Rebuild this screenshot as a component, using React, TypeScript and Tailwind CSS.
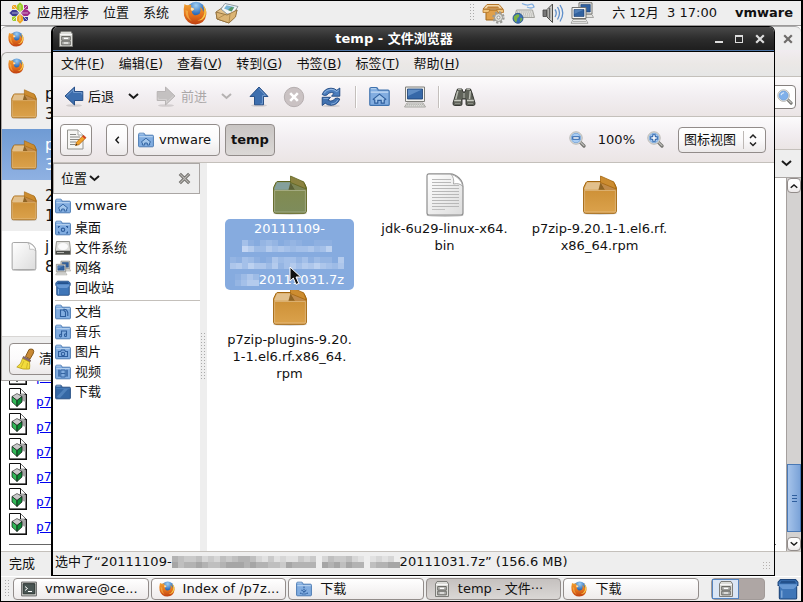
import type { ReactNode } from "react";

type IconProps = { className?: string };

const face = "font-['DejaVu_Sans','Noto_Sans_CJK_SC',sans-serif]";

/* ---------- icons ---------- */

function Dots({ cols, rows, step = 3, color = "#aaa" }: { cols: number; rows: number; step?: number; color?: string }) {
  const cells = [];
  for (let r = 0; r < rows; r++)
    for (let c = 0; c < cols; c++) cells.push(<rect key={`${r}-${c}`} x={c * step} y={r * step} width="1" height="1" fill={color} />);
  return (
    <svg width={cols * step} height={rows * step} shapeRendering="crispEdges" aria-hidden="true" className="shrink-0">
      {cells}
    </svg>
  );
}

function BoxIcon({ className = "", olive = false }: IconProps & { olive?: boolean }) {
  const body = olive ? "#838a4c" : "#c98b30";
  const low = olive ? "#7d8c5c" : "#dba24c";
  const edge = olive ? "#5f6420" : "#a3660f";
  const flapL = olive ? "#84a09c" : "#e2c08c";
  const flapM = olive ? "#7b8456" : "#c08a4a";
  const flapR = olive ? "#8b8240" : "#cc8c30";
  const id = olive ? "boxOlive" : "boxTan";
  return (
    <svg viewBox="0 0 34 40" className={className} aria-hidden="true">
      <defs>
        <linearGradient id={id} x1="0" y1="0" x2="0" y2="1">
          <stop offset="0" stopColor={body} />
          <stop offset="1" stopColor={low} />
        </linearGradient>
      </defs>
      <ellipse cx="17" cy="38.500" rx="17" ry="1.500" fill="#000" opacity=".15" />
      <path d="M.6 12.500 L3 7.600 Q3.600 6.500 5 6.500 H28 Q30.500 6.500 31.300 8 L33.400 12.500 V36 Q33.400 38.300 31.200 38.300 H2.800 Q.6 38.300 .6 36Z" fill={`url(#${id})`} stroke={edge} strokeWidth="1" />
      <path d="M1.300 13.500 L4 7.200 H17.500 L15.500 14.800 H1.300Z" fill={flapL} />
      <path d="M17.500 7.200 L22 14.800 H15.500Z" fill="#000" opacity=".3" />
      <path d="M17.500 7.200 H29 L32.500 14.800 H22Z" fill={flapM} />
      <path d="M17.500 1 L30.800 6.900 L33.300 14 L17.500 7.500Z" fill={flapR} stroke={edge} strokeWidth=".8" />
      <path d="M1.600 15.500 H32.400 V37 H1.600Z" fill="none" stroke="#fff" strokeWidth="1" opacity=".28" />
    </svg>
  );
}

function DocIcon({ className = "", lines = true }: IconProps & { lines?: boolean }) {
  return (
    <svg viewBox="0 0 38 44" className={className} aria-hidden="true">
      <defs>
        <linearGradient id="paper" x1="0" y1="0" x2="1" y2="1">
          <stop offset="0" stopColor="#fff" />
          <stop offset="1" stopColor="#dcdcdc" />
        </linearGradient>
      </defs>
      <ellipse cx="19" cy="42.500" rx="18.500" ry="1.500" fill="#000" opacity=".2" />
      <path d="M3 .8 H24 Q29 1 33 5 Q37 9 37 14 V40 Q37 42 35 42 H3 Q1 42 1 40 V3 Q1 .8 3 .8Z" fill="url(#paper)" stroke="#8d8d8d" strokeWidth="1.200" />
      <path d="M25 1.200 Q28.500 5 27.500 11 Q33.500 9.500 36.800 13.500 Q36.500 9 32 5 Q28 2 25 1.200Z" fill="#fff" stroke="#999" strokeWidth=".8" />
      {lines &&
        [6, 9, 12, 15, 18, 21, 24, 27, 30, 33].map((y, i) => (
          <path key={y} d={`M6 ${y + 0.5} H${i < 2 ? 25 : 33}`} stroke="#b8b8b8" strokeWidth="1.200" />
        ))}
      {lines && <path d="M6 36.500 H19" stroke="#c0c0c0" strokeWidth="1" />}
    </svg>
  );
}

type Glyph = "home" | "desktop" | "doc" | "music" | "photo" | "video" | "plain" | "down";

function FolderIcon({ glyph, className = "" }: IconProps & { glyph: Glyph }) {
  const s = { fill: "none", stroke: "#2d5d9c", strokeWidth: 1.1 };
  const shapes: Record<Glyph, ReactNode> = {
    home: (
      <path d="M3.300 10 L8 6.200 L12.700 10 L11.600 10.800 V13 H9.300 V11 H6.700 V13 H4.400 V10.800Z" fill="#a4c7ec" stroke="#2d5d9c" strokeWidth=".9" />
    ),
    desktop: (
      <>
        <path d="M3.500 8 V6.500 H5 M11 6.500 H12.500 V8 M12.500 11.500 V13 H11 M5 13 H3.500 V11.500" {...s} />
        <circle cx="8" cy="9.800" r="1.700" {...s} />
      </>
    ),
    doc: <path d="M5.500 6 H8.500 L10.500 8 V12.500 H5.500Z M8.500 5 L11.500 6 L12.800 8.500 V12" {...s} />,
    music: <path d="M6.500 11.500 V7 H11.500 V11 M6.500 11.600 A1 1 0 1 1 4.600 11.600 A1 1 0 1 1 6.500 11.600 M11.500 11.200 A1 1 0 1 1 9.600 11.200 A1 1 0 1 1 11.500 11.200" {...s} />,
    photo: (
      <>
        <path d="M3.500 7.500 H5.500 L6.500 6 H9.500 L10.500 7.500 H12.500 V12.500 H3.500Z" {...s} />
        <circle cx="8" cy="10" r="1.700" {...s} />
      </>
    ),
    video: <path d="M4 5.500 V13 M12 5.500 V13 M5.800 6 H10.200 V13 H5.800Z M5.800 9.500 H10.200 M3 7 H5 M3 9 H5 M3 11 H5 M11 7 H13 M11 9 H13 M11 11 H13" {...s} strokeWidth={0.9} />,
    plain: <path d="M1.500 13 L9 5 H13 L5 14Z" fill="#6a9bd2" opacity=".5" />,
    down: <path d="M8 5.500 V11 M5.500 8.800 L8 11.200 L10.500 8.800 M4 12 Q8 14 12 12" {...s} strokeDasharray="1.600 .6" />,
  };
  const dark = glyph === "plain";
  return (
    <svg viewBox="0 0 16 16" className={className} aria-hidden="true">
      <path d="M.6 14 V2.500 Q.6 1.200 1.800 1.200 H5.500 Q6.500 1.200 6.800 2.400 L7 3.200 H14.500 Q15.400 3.200 15.400 4.200 V14 Q15.400 14.800 14.500 14.800 H1.500 Q.6 14.800 .6 14Z" fill={dark ? "#3467a4" : "#82ade0"} stroke={dark ? "#204a80" : "#3f72ae"} strokeWidth=".9" />
      <path d="M1.300 4.700 H14.700" stroke={dark ? "#4f81bd" : "#c4dbf4"} strokeWidth=".9" />
      <path d="M1.300 2 H5.500" stroke="#c4dbf4" strokeWidth=".9" opacity=".8" />
      {shapes[glyph]}
    </svg>
  );
}

function FirefoxIcon({ className = "" }: IconProps) {
  return (
    <svg viewBox="0 0 24 24" className={className} aria-hidden="true">
      <defs>
        <linearGradient id="fox" x1="0" y1="0" x2="0" y2="1">
          <stop offset="0" stopColor="#f0a030" />
          <stop offset=".55" stopColor="#e2701c" />
          <stop offset="1" stopColor="#bf3f10" />
        </linearGradient>
        <radialGradient id="globe" cx=".5" cy=".2" r=".9">
          <stop offset="0" stopColor="#9fd0f4" />
          <stop offset=".5" stopColor="#2f6fbd" />
          <stop offset="1" stopColor="#12306d" />
        </radialGradient>
      </defs>
      <circle cx="13" cy="10" r="9.300" fill="url(#globe)" />
      <path d="M1.500 3 Q3 4.200 5 4.200 Q7 3.500 8.500 4 Q7.600 5.300 8 6.500 Q10.500 6.800 11.300 8 Q10.500 9.500 8.800 9.900 Q8.400 12.500 11 14 Q14 15 16.800 12.500 Q18.500 9.500 17 6 Q20 7.500 20.300 11 Q21.500 8 20 4 Q24 8 23.300 13.500 Q22 22.800 12.500 23.400 Q3.500 23 1 14.500 Q0 8 1.500 3Z" fill="url(#fox)" />
      <path d="M20 4 Q22.500 9 20.800 14 Q19 18.500 14.500 19.500 Q20.500 20 22.500 14 Q23.800 8 20 4Z" fill="#f8cf4c" />
      <path d="M2.500 9 Q2 17 9 20.500 Q4.500 16 5 10Z" fill="#f7b548" opacity=".7" />
      <path d="M8 6.500 Q10.500 6.800 11.300 8 Q10.500 9.500 8.800 9.900 Q7 8.500 8 6.500Z" fill="#fae0b0" />
    </svg>
  );
}

function CentosIcon({ className = "" }: IconProps) {
  const arms: [number, string, string][] = [
    [0, "#9ccd2a", "#a02a88"],
    [90, "#a02a88", "#3d3c93"],
    [180, "#efa724", "#9ccd2a"],
    [270, "#3d3c93", "#efa724"],
  ];
  return (
    <svg viewBox="0 0 22 22" className={className} aria-hidden="true">
      {arms.map(([r, c, corner]) => (
        <g key={r} transform={`rotate(${r} 11 11)`}>
          <path d="M11 .3 L14 3.300 V7.300 L11 10.300 L8 7.300 V3.300Z" fill={c} />
          <path d="M13 9 L15 7 V3 H19 V7Z" fill={corner} />
          <path d="M12.500 9.500 L19 3" stroke="#eee" strokeWidth=".7" />
          <path d="M11 3 V10" stroke="#eee" strokeWidth=".6" />
        </g>
      ))}
    </svg>
  );
}

function MailIcon({ className = "" }: IconProps) {
  return (
    <svg viewBox="0 0 24 22" className={className} aria-hidden="true">
      <path d="M1 10 L11 3 L22 8 L20 15 L14 21 L2 17Z" fill="#e3c28a" stroke="#92713c" strokeWidth=".9" />
      <path d="M6 7 L10 1.500 L23 4.500 L18 12 L12 12Z" fill="#f4f6f5" stroke="#84919a" strokeWidth=".9" />
      <path d="M9 6.500 L11.500 3.200 L19.500 5 L16.500 9.500Z" fill="#77b4d4" />
      <path d="M13 8 L16 5 L19 5.500 L16.500 9.500Z" fill="#5b9a68" />
      <path d="M1 10 L12 13 L22 8 L20.500 15 L14 21 L2 17Z" fill="#dbb473" stroke="#92713c" strokeWidth=".9" />
      <path d="M2 17 L10 12.500 M14 21 L15 12" stroke="#a88348" strokeWidth=".8" />
    </svg>
  );
}

function UpdateIcon({ className = "" }: IconProps) {
  return (
    <svg viewBox="0 0 24 22" className={className} aria-hidden="true">
      <path d="M4 8 H19 V18 H4Z" fill="#e0a04a" stroke="#a4681a" />
      <path d="M5 2.500 H17 L21 7 H1Z" fill="#f3d7a8" stroke="#b5772a" />
      <path d="M6 4.500 H16 L17.500 6.500 H4.500Z" fill="#c08238" />
      <path d="M1 7.500 H8 L6.500 10.500 H1Z M14.500 7.500 H21.500 V10.500 H16Z" fill="#f0c47c" stroke="#b5772a" strokeWidth=".8" />
      <circle cx="16.500" cy="15.500" r="5" fill="none" stroke="#9a9a96" strokeWidth="2.400" strokeDasharray="2.200 1.700" />
      <circle cx="16.500" cy="15.500" r="4" fill="#deded9" stroke="#92928c" strokeWidth=".9" />
      <circle cx="16.500" cy="15.500" r="1.500" fill="#f5f5f5" stroke="#85857f" strokeWidth=".8" />
    </svg>
  );
}

function KeyboardIcon({ className = "" }: IconProps) {
  return (
    <svg viewBox="0 0 24 22" className={className} aria-hidden="true">
      <path d="M10 1.500 Q15 4 18 2.500 T22 5 Q19 7 15 5" fill="none" stroke="#82aee0" strokeWidth="1.300" />
      <path d="M4.500 8 H20.500 L22.500 15.500 H2.500Z" fill="#e6e6e2" stroke="#a2a29d" />
      <path d="M5 10 H20.500 M4.500 12 H21 M4 14 H21.500" stroke="#a5a5a0" strokeWidth="1" strokeDasharray="1.300 .8" />
      <circle cx="6" cy="16.300" r="5" fill="#3c70b6" stroke="#1e4d87" strokeWidth=".8" />
      <path d="M2 14.500 Q5 11.500 7 12.500 Q8 14.500 5.500 16 Q5 19 4 20.500 Q1 17.500 2 14.500Z M8.500 15.500 L10.500 16.500 Q9.500 19.500 8 20Z" fill="#7cb342" />
    </svg>
  );
}

function SpeakerIcon({ className = "" }: IconProps) {
  return (
    <svg viewBox="0 0 22 22" className={className} aria-hidden="true">
      <path d="M1 8 H4.500 V14.500 H1Z" fill="#777" stroke="#444" strokeWidth=".8" />
      <path d="M5 7.500 L10.500 2 V20.500 L5 15Z" fill="#c9c9c5" stroke="#4e4e4a" />
      <path d="M7.500 6 V16.500" stroke="#666" strokeWidth="1.500" />
      <path d="M13 7.500 Q15.500 11 13 15 M15.500 5 Q19.500 11 15.500 17.500 M18 3 Q23.500 11 18 19.500" fill="none" stroke="#5f8fca" strokeWidth="1.300" />
    </svg>
  );
}

function NetworkIcon({ className = "" }: IconProps) {
  return (
    <svg viewBox="0 0 24 22" className={className} aria-hidden="true">
      <path d="M9 .8 H22 V12 H9Z" fill="#f1f1ee" stroke="#72726e" />
      <path d="M10.800 2.500 H20.300 V10 H10.800Z" fill="#2f5f9e" stroke="#173a6b" strokeWidth=".6" />
      <path d="M15 12.500 H22 L23.500 15.500 H15Z" fill="#e4e4e0" stroke="#8a8a86" strokeWidth=".7" />
      <path d="M2 5.500 H16 V16.500 H2Z" fill="#f6f6f4" stroke="#72726e" />
      <path d="M4 7.500 H14 V14.500 H4Z" fill="#32629f" stroke="#173a6b" strokeWidth=".6" />
      <path d="M4.300 7.800 H13.500 L4.300 12Z" fill="#6f9ccf" opacity=".5" />
      <path d="M3 17.500 H16 L18 21.300 H1Z" fill="#ececea" stroke="#8a8a86" strokeWidth=".7" />
      <path d="M3 19.500 H16" stroke="#a5a5a1" strokeWidth=".8" />
    </svg>
  );
}

function CabinetIcon({ className = "" }: IconProps) {
  return (
    <svg viewBox="0 0 14 16" className={className} aria-hidden="true">
      <path d="M2 .5 H12 L13.500 3 V15.500 H.5 V3Z" fill="#dcdcd8" stroke="#7d7d79" />
      <path d="M1 3.500 H13" stroke="#f8f8f8" />
      <path d="M2.700 5.500 H11.300 V9.200 H2.700Z M2.700 10.200 H11.300 V13.900 H2.700Z" fill="#b5b5b1" stroke="#62625e" strokeWidth=".9" />
      <path d="M5 7.300 H9 M5 12 H9" stroke="#fff" strokeWidth="1.200" />
    </svg>
  );
}

function Arrow({ className = "", gray = false, up = false }: IconProps & { gray?: boolean; up?: boolean }) {
  return (
    <svg viewBox="0 0 20 21" className={className} aria-hidden="true">
      <ellipse cx="10" cy="19.500" rx="8" ry="1.300" fill="#000" opacity=".12" />
      <g transform={up ? "rotate(90 10 10)" : gray ? "rotate(180 10 10)" : undefined}>
        <path d="M1 10 L10.500 1 V5.500 H18.800 V14.500 H10.500 V19Z" fill={gray ? "#c4c1c1" : "#3d6eae"} stroke={gray ? "#b4b1b1" : "#1d4680"} strokeWidth=".9" />
        <path d="M2.500 10 L9.500 3.400 V6.500 H17.800 V8.500" fill="none" stroke={gray ? "#d6d3d3" : "#789fd0"} strokeWidth=".9" />
      </g>
    </svg>
  );
}

function Chevron({ className = "", color = "#1a1a1a", strokeWidth = 2 }: IconProps & { color?: string; strokeWidth?: number }) {
  return (
    <svg viewBox="0 0 11 7" className={className} aria-hidden="true">
      <path d="M1 1 L5.500 5 L10 1" fill="none" stroke={color} strokeWidth={strokeWidth} />
    </svg>
  );
}

function CrossIcon({ className = "", color = "#777" }: IconProps & { color?: string }) {
  return (
    <svg viewBox="0 0 10 10" className={className} aria-hidden="true">
      <path d="M1.200 1.200 L8.800 8.800 M8.800 1.200 L1.200 8.800" stroke={color} strokeWidth="2.200" />
    </svg>
  );
}

function CloseIcon({ className = "" }: IconProps) {
  return (
    <svg viewBox="0 0 13 13" className={className} aria-hidden="true">
      <path d="M1.800 1.800 L11.200 11.200 M11.200 1.800 L1.800 11.200" stroke="#75736f" strokeWidth="3.200" />
      <path d="M2.300 2.300 L10.700 10.700 M10.700 2.300 L2.300 10.700" stroke="#b9b7b4" strokeWidth="1.200" />
    </svg>
  );
}

function StopIcon({ className = "" }: IconProps) {
  return (
    <svg viewBox="0 0 22 22" className={className} aria-hidden="true">
      <circle cx="11" cy="11" r="9.700" fill="#cac2c3" stroke="#b5aeaf" />
      <path d="M7.200 7.200 L14.800 14.800 M14.800 7.200 L7.200 14.800" stroke="#fff" strokeWidth="2.600" />
    </svg>
  );
}

function ReloadIcon({ className = "" }: IconProps) {
  return (
    <svg viewBox="0 0 20 20" className={className} aria-hidden="true">
      <ellipse cx="10" cy="19" rx="9" ry="1" fill="#000" opacity=".12" />
      <path d="M1.200 7.500 Q3.500 1.300 10 1.200 Q13.500 1.200 15.800 3.300 L18.800 1 V9.200 H10.500 L13 6.300 Q10.500 4.800 8 6 Q6.800 6.600 6 8 L3.500 8.500Z" fill="#4b7dbd" stroke="#1d4680" strokeWidth=".9" />
      <path d="M18.800 12 Q16.500 18.200 10 18.300 Q6.500 18.300 4.200 16.200 L1.200 18.500 V10.300 H9.500 L7 13.200 Q9.500 14.700 12 13.500 Q13.200 12.900 14 11.500 L16.500 11Z" fill="#4272b0" stroke="#1d4680" strokeWidth=".9" />
      <path d="M3 6.500 Q5 2.500 10 2.300 Q13.200 2.300 15.700 4.600 L17.700 3.200" fill="none" stroke="#9dbfe6" strokeWidth=".9" />
      <path d="M2.400 11.500 H7.300 M17 12.800 Q15 17 10 17.200" fill="none" stroke="#8db2e0" strokeWidth=".8" />
    </svg>
  );
}

function ComputerIcon({ className = "" }: IconProps) {
  return (
    <svg viewBox="0 0 22 22" className={className} aria-hidden="true">
      <path d="M1.500 1 H20.500 V15.500 H1.500Z" fill="#f2f2ef" stroke="#7d7d79" />
      <path d="M3.500 3 H18.500 V13 H3.500Z" fill="#3668a8" stroke="#1b3f73" strokeWidth=".8" />
      <path d="M4 3.500 H18 L4 10Z" fill="#7ba6d9" opacity=".6" />
      <path d="M3 17 H19 L21.500 21 H.5Z" fill="#ececea" stroke="#96968f" strokeWidth=".8" />
      <path d="M3 18.500 H19 M2.300 19.800 H20" stroke="#a5a5a0" strokeWidth=".8" strokeDasharray="1.500 .6" />
    </svg>
  );
}

function BinocularsIcon({ className = "" }: IconProps) {
  return (
    <svg viewBox="0 0 24 20" className={className} aria-hidden="true">
      <path d="M5.500 2 H10 L11 5 H13 L14 2 H18.500 L20 6 L23 16 Q23.200 18.500 21.500 18.500 H15.500 Q14 18.500 14 17 V12 H10 V17 Q10 18.500 8.500 18.500 H2.500 Q.8 18.500 1 16 L4 6Z" fill="#60635a" stroke="#2b2d28" strokeWidth=".9" />
      <path d="M5.800 4 L3.800 12 M18.300 4 L17.500 12" stroke="#b9bcb2" strokeWidth="1.500" />
      <path d="M2.200 13.500 H9 M15 13.500 H21.800" stroke="#c9ccc2" strokeWidth="1.400" />
      <path d="M3 16.500 H8 M16 16.500 H21" stroke="#8a8d84" strokeWidth="1.200" />
      <path d="M12 6 V11" stroke="#9a9d94" strokeWidth="1.500" />
      <path d="M6 2.500 H9.500 M14.500 2.500 H18" stroke="#a9aca3" strokeWidth="1.200" />
    </svg>
  );
}

function MagnifierIcon({ className = "", sign }: IconProps & { sign?: "plus" | "minus" }) {
  return (
    <svg viewBox="0 0 17 17" className={className} aria-hidden="true">
      <path d="M11.200 11.200 L15 15" stroke="#73736f" strokeWidth="3.200" strokeLinecap="round" />
      <path d="M11.700 11.500 L15 14.600" stroke="#c2c2be" strokeWidth="1.200" strokeLinecap="round" />
      <circle cx="7" cy="7" r="6.200" fill="#ecece9" stroke="#a5a5a0" strokeWidth=".8" />
      <circle cx="7" cy="7" r="4.800" fill={sign ? "#a9ccf3" : "#7fb0ea"} stroke="#6b9ad2" strokeWidth=".8" />
      {!sign && <path d="M4.200 6.500 Q5 4.300 7.500 4" fill="none" stroke="#e2f0fd" strokeWidth="1.200" />}
      {sign && <path d={sign === "plus" ? "M7 3.200 V10.800 M3.200 7 H10.800" : "M3.200 7 H10.800"} stroke="#2d62a8" strokeWidth="3.400" />}
      {sign && <path d={sign === "plus" ? "M7 4.300 V9.700 M4.300 7 H9.700" : "M4.300 7 H9.700"} stroke="#fff" strokeWidth="1.500" />}
    </svg>
  );
}

function EditIcon({ className = "" }: IconProps) {
  return (
    <svg viewBox="0 0 21 21" className={className} aria-hidden="true">
      <path d="M1.500 1 H12 L17 6 V20 H1.500Z" fill="#f6f6f4" stroke="#94948f" />
      <path d="M12 1 V6 H17" fill="#fff" stroke="#94948f" strokeWidth=".8" />
      <path d="M4 5.500 H10 M4 8 H14 M4 10.500 H14 M4 13 H10 M4 15.500 H9" stroke="#8a8a86" strokeWidth="1" />
      <path d="M9.500 16.500 L10.500 13.200 L17.500 6.200 L20 8.700 L13 15.600Z" fill="#f3a32b" stroke="#b0620c" strokeWidth=".8" />
      <path d="M17.500 6.200 L20 8.700 L18.800 9.800 L16.300 7.400Z" fill="#d33a2c" />
      <path d="M9.500 16.500 L10.100 14.700 L11.300 15.900Z" fill="#222" />
    </svg>
  );
}

function DriveIcon({ className = "" }: IconProps) {
  return (
    <svg viewBox="0 0 16 16" className={className} aria-hidden="true">
      <path d="M1.500 1.500 H14.500 L15.500 10 V14.500 H.5 V10Z" fill="#dededb" stroke="#8b8b87" strokeWidth=".9" />
      <ellipse cx="8" cy="6.500" rx="5" ry="3.500" fill="#fafafa" />
      <path d="M.8 10.800 H15.200 V14.200 H.8Z" fill="#4c4e4a" />
      <path d="M2 12.500 H9" stroke="#b5b5b1" />
    </svg>
  );
}

function TrashIcon({ className = "" }: IconProps) {
  return (
    <svg viewBox="0 0 16 16" className={className} aria-hidden="true">
      <path d="M2.500 1.200 H13.500 L15.200 3 V5.500 H14.300 V14.500 Q14.300 15.300 13.300 15.300 H2.700 Q1.700 15.300 1.700 14.500 V5.500 H.8 V3Z" fill="#3f76b8" stroke="#1d467c" strokeWidth=".8" />
      <path d="M3 2.200 H13 L14 4 H2Z" fill="#23518c" />
      <path d="M1.500 4.500 H14.500 V5.800 L12 8 H4 L1.500 5.800Z" fill="#6798d3" />
      <path d="M3.500 9 V14.300" stroke="#8db5e2" strokeWidth=".8" />
    </svg>
  );
}

function BroomIcon({ className = "" }: IconProps) {
  return (
    <svg viewBox="0 0 20 22" className={className} aria-hidden="true">
      <path d="M13 1.500 Q15 .5 17 1.500 Q18.500 3 17 6 L14 11 L9.500 8.500Z" fill="#c98a35" stroke="#7e4f10" strokeWidth=".9" />
      <path d="M7.500 8.500 L14.500 12 L14 14 L6.500 10.500Z" fill="#8a6a78" stroke="#6a4a3a" strokeWidth=".7" />
      <path d="M6.500 10.500 L13.500 14 Q14 18 13.500 21 Q7 22 .8 19 Q5.500 16 6.500 10.500Z" fill="#f2dc3c" stroke="#b59a14" strokeWidth=".8" />
      <path d="M8 13 L5 19.500 M11.500 15 L10.500 20.500" stroke="#c9ae24" strokeWidth=".8" />
    </svg>
  );
}

function PackageFileIcon({ className = "" }: IconProps) {
  return (
    <svg viewBox="0 0 18 22" className={className} aria-hidden="true">
      <path d="M.5 .5 H11.500 L17.300 6.300 V21.300 H.5Z" fill="#fff" stroke="#111" />
      <path d="M17.300 6 V21.300 H.5" fill="none" stroke="#111" strokeWidth="1.500" />
      <path d="M11.500 .5 V6.300 H17" fill="#fff" stroke="#111" />
      <path d="M9 6 H15 L16.500 7.500 V14 L12 12Z" fill="#a5a5a5" />
      <path d="M3 8.500 L8 5.500 L13 8.500 L8 12.500Z" fill="#c9c9c9" stroke="#444" strokeWidth=".7" />
      <path d="M3 8.500 L8 12.500 V18.500 L3 14Z" fill="#32b858" stroke="#111" strokeWidth=".7" />
      <path d="M13 8.500 L8 12.500 V18.500 L13 14Z" fill="#0d8a36" stroke="#111" strokeWidth=".7" />
    </svg>
  );
}

function TerminalIcon({ className = "" }: IconProps) {
  return (
    <svg viewBox="0 0 16 15" className={className} aria-hidden="true">
      <path d="M.6 .6 H15.400 V14.400 H.6Z" fill="#d5d5d1" stroke="#666" />
      <path d="M2.200 2.200 H13.800 V12.300 H2.200Z" fill="#4a5654" stroke="#2a3230" />
      <path d="M4 5 L6.500 7 L4 9 M7 10 H11" fill="none" stroke="#fff" strokeWidth="1" />
    </svg>
  );
}

/* ---------- pixelated patches over hidden parts of a name ---------- */

function Mosaic({ rows, fill, cell }: { rows: string[]; fill: string; cell: number }) {
  return (
    <svg width={rows[0].length * cell} height={rows.length * cell} shapeRendering="crispEdges" aria-hidden="true" className="shrink-0">
      {rows.flatMap((row, r) =>
        [...row].map((v, c) => (
          <rect key={`${r}-${c}`} x={c * cell} y={r * cell} width={cell} height={cell} fill={fill} opacity={Number(v) / 10} />
        )),
      )}
    </svg>
  );
}

/* ---------- shared surfaces ---------- */

const barTone = "bg-linear-to-b from-[#fcfbfc] via-[#f2eef1] to-[#ebe5e5]";
const menuTone = "bg-linear-to-b from-[#f1ecf0] via-[#ebe8e6] to-[#e6e6e6]";
const buttonTone = "rounded border border-[#928c8a] bg-linear-to-b from-white via-[#fbfafb] to-[#ece9e9]";

/* ---------- panels ---------- */

function TopPanel() {
  return (
    <header className="flex h-[25px] shrink-0 items-center justify-between border-b border-[#9c9a9a] bg-[#eee] px-2">
      <nav className="flex items-center">
        <CentosIcon className="mr-1.5 h-[22px] w-[22px]" />
        <button className="mr-3.5">应用程序</button>
        <button className="mr-3.5">位置</button>
        <button className="mr-3.5">系统</button>
        <button aria-label="Firefox" className="mr-2">
          <FirefoxIcon className="h-6 w-6" />
        </button>
        <button aria-label="Mail">
          <MailIcon className="h-[22px] w-6" />
        </button>
      </nav>
      <div className="flex items-center gap-1.5">
        <Dots cols={2} rows={6} />
        <UpdateIcon className="h-[22px] w-6" />
        <KeyboardIcon className="h-[22px] w-6" />
        <SpeakerIcon className="h-[22px] w-[22px]" />
        <NetworkIcon className="mr-3 h-[22px] w-6" />
        <time className="mr-3 whitespace-pre">六 12月  3 17:00</time>
        <span className="font-bold">vmware</span>
      </div>
    </header>
  );
}

function BottomPanel() {
  const tasks: { label: string; icon: ReactNode; active?: boolean }[] = [
    { label: "vmware@ce...", icon: <TerminalIcon className="h-4 w-4" /> },
    { label: "Index of /p7z...", icon: <FirefoxIcon className="h-4 w-4" /> },
    { label: "下载", icon: <FolderIcon glyph="down" className="h-4 w-4" /> },
    { label: "temp - 文件···", icon: <CabinetIcon className="h-4 w-4" />, active: true },
    { label: "下载", icon: <FirefoxIcon className="h-4 w-4" /> },
  ];
  return (
    <footer className="flex h-[25px] shrink-0 items-center border-t border-white bg-[#eee] pr-0.5 pl-1">
      <Dots cols={2} rows={6} />
      <div className="ml-0.5 flex min-w-0 flex-1 gap-0.5">
        {tasks.map((t, i) => (
          <button
            key={i}
            className={`flex h-[22px] min-w-0 flex-1 items-center gap-2 rounded border border-[#928c8a] px-[7px] whitespace-nowrap ${
              t.active ? "bg-linear-to-b from-[#c5c1bf] to-[#dad7d5]" : "bg-linear-to-b from-white to-[#eeebeb]"
            }`}
          >
            <span className="shrink-0">{t.icon}</span>
            {t.label}
          </button>
        ))}
      </div>
      <div className="ml-3 flex h-[22px] w-[54px] rounded border border-[#a19a98] bg-[#aea6a4]">
        <button aria-label="Workspace 1" className="flex w-[27px] items-center justify-center border border-[#5484c0] bg-[#dbe6f5]">
          <CabinetIcon className="h-4 w-3.5" />
        </button>
        <button aria-label="Workspace 2" className="flex-1" />
      </div>
      <button aria-label="Trash" className="ml-3">
        <TrashIcon className="h-[22px] w-[22px]" />
      </button>
    </footer>
  );
}

/* ---------- windows in the background ---------- */

function BrowserWindow() {
  return (
    <section className="absolute inset-0 flex flex-col bg-white">
      <div className="flex h-6 shrink-0 items-center justify-between rounded-t-md border-t border-[#aaa] bg-[#eee] pr-2 pl-[7px]">
        <FirefoxIcon className="h-4 w-4" />
        <button aria-label="Close browser">
          <CrossIcon className="h-2.5 w-2.5" color="#6e6c6a" />
        </button>
      </div>
      <div className={`h-[27px] shrink-0 border-b border-[#c4c0bb] ${menuTone}`} />
      <div className={`flex h-10 shrink-0 items-center justify-end border-b border-[#c4c0bb] pr-[5px] ${barTone}`}>
        <div className="flex h-6 w-40 items-center rounded border border-[#85807e] bg-white pr-0.5">
          <input aria-label="Search" className="min-w-0 flex-1 outline-none" />
          <MagnifierIcon className="h-4 w-4" />
        </div>
      </div>
      <div className={`h-[33px] shrink-0 border-b border-[#c4c0bb] ${barTone}`} />
      <div className="flex h-[28px] shrink-0 items-center justify-end border-b border-[#aaa6a4] bg-[#eee] pr-[9px]">
        <button aria-label="List all tabs">
          <Chevron className="h-[7px] w-[11px]" />
        </button>
      </div>
      <div className="flex min-h-0 flex-1 border-b border-[#c4c0bb]">
        <div className="flex flex-1 flex-col justify-end gap-[3px] overflow-hidden pr-2.5 pb-1.5 pl-2">
          {Array.from({ length: 7 }, (_, i) => (
            <a key={i} href="#file" className="flex h-[22px] shrink-0 items-end gap-[9px] font-['DejaVu_Sans_Mono',monospace] text-[13px] leading-4 text-[#0000ee] underline">
              <PackageFileIcon className="h-[22px] w-[18px]" />
              p7
            </a>
          ))}
          <div className="mt-1.5 border-t border-[#666]" />
        </div>
        <div className="flex w-[15px] flex-col border-l border-[#a5a09e] bg-[#d4d2d1]">
          <button aria-label="Scroll up" className={`flex h-[15px] items-center justify-center ${buttonTone}`}>
            <Chevron className="h-1.5 w-2 rotate-180" />
          </button>
          <div className="flex-1" />
          <div className="flex h-[68px] flex-col items-center justify-center gap-0.5 border border-[#4a79b5] bg-linear-to-r from-[#a5c3ea] to-[#7ba3d8]">
            <i className="h-px w-[5px] bg-[#2f5f9e]" />
            <i className="h-px w-[5px] bg-[#2f5f9e]" />
            <i className="h-px w-[5px] bg-[#2f5f9e]" />
          </div>
          <div className="h-[5px]" />
          <button aria-label="Scroll down" className={`flex h-3.5 items-center justify-center ${buttonTone}`}>
            <Chevron className="h-1.5 w-2" />
          </button>
        </div>
      </div>
      <div className="flex h-6 shrink-0 items-center bg-[#eee] pl-2">完成</div>
    </section>
  );
}

function DownloadsWindow() {
  const rows = [
    { name: "p", size: "3", tone: "bg-[#eee]" },
    { name: "p", size: "3", tone: "bg-linear-to-b from-[#6f9bd4] to-[#8fb1e2] text-white" },
    { name: "2", size: "1", tone: "bg-[#eee]" },
    { name: "j", size: "8", tone: "bg-white", doc: true },
  ];
  return (
    <section className="absolute top-[26px] left-0 flex w-80 flex-col rounded-t-md border-t border-l border-b border-[#aaa6a4] bg-[#eee]">
      <div className="flex h-[25px] items-center pl-1.5">
        <FirefoxIcon className="h-4 w-4" />
      </div>
      <ul className="min-h-[259px] border-b border-[#d8d6d4] bg-white">
        {rows.map((r, i) => (
          <li key={i} className={`flex h-[51px] items-center gap-2 pl-[9px] text-[15px] leading-5 ${r.tone}`}>
            {r.doc ? <DocIcon lines={false} className="h-[29px] w-[26px]" /> : <BoxIcon className="h-[30px] w-[26px]" />}
            <span>
              {r.name}
              <br />
              {r.size}
            </span>
          </li>
        ))}
      </ul>
      <div className="flex h-[43px] items-center pl-[7px]">
        <button className={`flex h-8 w-24 items-center gap-[3px] pl-1.5 ${buttonTone}`}>
          <BroomIcon className="h-[22px] w-5" />清
        </button>
      </div>
    </section>
  );
}

/* ---------- file browser ---------- */

function TitleBar() {
  return (
    <div className="flex h-[25px] shrink-0 items-center border-b border-black bg-linear-to-b from-[#494949] via-[#2c2c2c] to-[#1d1d1d] pr-[9px] pl-1.5 text-white shadow-[inset_0_-1px_0_#4f75a8]">
      <CabinetIcon className="h-4 w-3.5" />
      <h1 className="flex-1 text-center font-bold">temp - 文件浏览器</h1>
      <div className="flex items-center gap-3">
        <button aria-label="Minimize" className="mt-1.5 h-0.5 w-2 bg-[#ddd]" />
        <button aria-label="Maximize" className="h-2 w-2 border border-t-2 border-[#ddd]" />
        <button aria-label="Close">
          <CrossIcon className="h-2.5 w-2.5" color="#ddd" />
        </button>
      </div>
    </div>
  );
}

function MenuBar() {
  const menus = [
    ["文件", "F"],
    ["编辑", "E"],
    ["查看", "V"],
    ["转到", "G"],
    ["书签", "B"],
    ["标签", "T"],
    ["帮助", "H"],
  ];
  return (
    <nav className={`flex h-[25px] shrink-0 items-center gap-3.5 border-b border-[#c4c0bb] pl-2 whitespace-nowrap ${menuTone}`}>
      {menus.map(([name, key]) => (
        <button key={key}>
          {name}(<u>{key}</u>)
        </button>
      ))}
    </nav>
  );
}

function Separator() {
  return <div className="h-[22px] w-0.5 border-l border-[#c4bfbc] bg-white" />;
}

function ToolBar() {
  return (
    <div className={`flex h-10 shrink-0 items-center border-b border-[#c4c0bb] pl-[11px] ${barTone}`}>
      <button className="flex items-center gap-1">
        <Arrow className="h-[21px] w-5" />
        后退
      </button>
      <button aria-label="Back history" className="ml-3.5">
        <Chevron className="h-[7px] w-[11px]" />
      </button>
      <button disabled className="ml-[17px] flex items-center gap-[5px] text-[#aba8a8]">
        <Arrow gray className="h-[21px] w-5" />
        前进
      </button>
      <button disabled aria-label="Forward history" className="ml-3.5">
        <Chevron className="h-[7px] w-[11px]" color="#b5b2b2" />
      </button>
      <button aria-label="Up" className="ml-[17px]">
        <Arrow up className="h-[21px] w-5" />
      </button>
      <button disabled aria-label="Stop" className="ml-3.5">
        <StopIcon className="h-[22px] w-[22px]" />
      </button>
      <button aria-label="Reload" className="ml-4">
        <ReloadIcon className="h-5 w-5" />
      </button>
      <div className="ml-3.5">
        <Separator />
      </div>
      <button aria-label="Home" className="ml-3">
        <FolderIcon glyph="home" className="h-[21px] w-[21px]" />
      </button>
      <button aria-label="Computer" className="ml-3.5">
        <ComputerIcon className="h-[22px] w-[22px]" />
      </button>
      <div className="ml-3">
        <Separator />
      </div>
      <button aria-label="Search files" className="ml-3">
        <BinocularsIcon className="h-5 w-6" />
      </button>
    </div>
  );
}

function LocationBar() {
  return (
    <div className={`flex h-[46px] shrink-0 items-center border-b border-[#c4c0bb] pr-2 pl-[7px] ${barTone}`}>
      <button aria-label="Edit location" className={`flex h-8 w-8 items-center justify-center ${buttonTone}`}>
        <EditIcon className="h-[21px] w-[21px]" />
      </button>
      <button aria-label="Parent folders" className={`ml-3.5 flex h-8 w-[22px] items-center justify-center ${buttonTone}`}>
        <Chevron className="h-1.5 w-2 rotate-90" />
      </button>
      <button className={`ml-[5px] flex h-8 items-center gap-[5px] px-1 pr-2 ${buttonTone}`}>
        <FolderIcon glyph="home" className="h-4 w-4" />
        vmware
      </button>
      <button className="ml-[5px] h-8 rounded border border-[#928c8a] bg-linear-to-b from-[#c9c5c3] to-[#dbd8d6] px-[5px] font-bold">temp</button>
      <div className="flex-1" />
      <button aria-label="Zoom out" className="mr-3">
        <MagnifierIcon sign="minus" className="h-[17px] w-[17px]" />
      </button>
      <span>100%</span>
      <button aria-label="Zoom in" className="mr-3.5 ml-3">
        <MagnifierIcon sign="plus" className="h-[17px] w-[17px]" />
      </button>
      <div className={`flex h-[26px] items-center pr-2 pl-[5px] ${buttonTone}`}>
        <select aria-label="View mode" className="w-[59px] appearance-none bg-transparent outline-none">
          <option>图标视图</option>
        </select>
        <svg viewBox="0 0 14 18" className="pointer-events-none h-[18px] w-3.5" aria-hidden="true">
          <path d="M.5 0 V18" stroke="#bdb8b5" />
          <path d="M7 7 L10 4 L13 7 M7 11.500 L10 14.500 L13 11.500" fill="none" stroke="#222" strokeWidth="1.500" />
        </svg>
      </div>
    </div>
  );
}

function PlacesSidebar() {
  const folder = (glyph: Glyph) => <FolderIcon glyph={glyph} className="h-4 w-4" />;
  const row = "flex h-5 items-center gap-1";
  return (
    <aside className="flex w-[147px] shrink-0 flex-col bg-white">
      <div className="flex h-[31px] shrink-0 items-center justify-between border border-[#aaa6a4] bg-[#eee] pr-2 pl-[7px]">
        <button className="flex items-center gap-0.5">
          位置
          <Chevron className="h-[7px] w-[11px]" />
        </button>
        <button aria-label="Close sidebar">
          <CloseIcon className="h-[13px] w-[13px]" />
        </button>
      </div>
      <nav className="flex flex-col pl-0.5">
        <button className="flex h-6 items-center gap-1">{folder("home")}vmware</button>
        <button className={row}>{folder("desktop")}桌面</button>
        <button className={row}>
          <DriveIcon className="h-4 w-4" />
          文件系统
        </button>
        <button className={row}>
          <NetworkIcon className="h-4 w-4" />
          网络
        </button>
        <button className={row}>
          <TrashIcon className="h-4 w-4" />
          回收站
        </button>
        <hr className="mt-0.5 mb-px border-[#c4c0bb]" />
        <button className={row}>{folder("doc")}文档</button>
        <button className={row}>{folder("music")}音乐</button>
        <button className={row}>{folder("photo")}图片</button>
        <button className={row}>{folder("video")}视频</button>
        <button className={row}>{folder("plain")}下载</button>
      </nav>
    </aside>
  );
}

function FileItem({ icon, children, selected = false }: { icon: ReactNode; children: ReactNode; selected?: boolean }) {
  return (
    <button className={`flex w-[129px] flex-col items-center justify-self-center self-start ${selected ? "relative z-10" : ""}`}>
      <span className="flex h-12 items-center">{icon}</span>
      <span className={`w-full rounded-[5px] pt-px pb-0.5 text-center leading-[17px] ${selected ? "bg-[#86abdf] text-white" : ""}`}>{children}</span>
    </button>
  );
}

function FileGrid() {
  return (
    <main className="relative grid flex-1 auto-rows-[111px] grid-cols-[repeat(auto-fill,155px)] bg-white pt-2 pl-[5px]">
      <FileItem selected icon={<BoxIcon olive className="h-10 w-[34px]" />}>
        <span className="block">20111109-</span>
        <span className="flex h-[17px] items-center justify-center">
          <Mosaic cell={6} fill="#d3e1f7" rows={["4102320121001110", "8633645434453470"]} />
        </span>
        <span className="flex h-[17px] items-center justify-center">
          <Mosaic cell={6} fill="#d3e1f7" rows={["21431015344241322060", "56475536246465754350"]} />
        </span>
        <span className="flex h-[17px] items-center justify-center">
          <Mosaic cell={6} fill="#d3e1f7" rows={["1353", "2466"]} />
          20111031.7z
        </span>
      </FileItem>
      <FileItem icon={<DocIcon className="h-11 w-[38px]" />}>
        jdk-6u29-linux-x64.
        <br />
        bin
      </FileItem>
      <FileItem icon={<BoxIcon className="h-10 w-[34px]" />}>
        <span className="-mx-2 block whitespace-nowrap">p7zip-9.20.1-1.el6.rf.</span>
        x86_64.rpm
      </FileItem>
      <div className="col-start-1 justify-self-center">
        <FileItem icon={<BoxIcon className="h-10 w-[34px]" />}>
          p7zip-plugins-9.20.
          <br />
          1-1.el6.rf.x86_64.
          <br />
          rpm
        </FileItem>
      </div>
      <svg viewBox="0 0 13 20" className="absolute top-[103px] left-[82px] z-20 h-5 w-[13px]" aria-hidden="true">
        <path d="M1 1 V15 L4.300 12 L7 18.500 L9.800 17.300 L7 11 H11.800Z" fill="#111" stroke="#fff" strokeWidth="1" />
      </svg>
    </main>
  );
}

function StatusBar() {
  return (
    <div className="flex h-6 shrink-0 items-center border-t border-[#c4c0bb] bg-[#eee] pb-1 pl-0.5 whitespace-nowrap">
      选中了“20111109-
      <Mosaic
        cell={6}
        fill="#777"
        rows={["54334232434554213121132302433421012120", "64556544566656554436555506564655045566"]}
      />
      20111031.7z” (156.6 MB)
      <div className="ml-auto self-end pr-0.5">
        <Dots cols={3} rows={3} color="#b5b0ae" />
      </div>
    </div>
  );
}

function FileBrowserWindow() {
  return (
    <section className="absolute inset-y-0 right-[26px] left-[50px] flex flex-col overflow-hidden rounded-t-md border border-l-2 border-black bg-[#eee]">
      <TitleBar />
      <MenuBar />
      <ToolBar />
      <LocationBar />
      <div className="flex min-h-0 flex-1">
        <PlacesSidebar />
        <div className="flex w-[7px] shrink-0 items-center justify-center overflow-hidden bg-[#eee]">
          <Dots cols={2} rows={16} />
        </div>
        <FileGrid />
      </div>
      <StatusBar />
    </section>
  );
}

export default function App() {
  return (
    <div className={`flex h-screen flex-col overflow-hidden border border-r-2 border-black bg-[#eee] text-[13px] leading-4 text-[#111] ${face}`}>
      <TopPanel />
      <div className="relative min-h-0 flex-1 overflow-hidden">
        <BrowserWindow />
        <DownloadsWindow />
        <FileBrowserWindow />
      </div>
      <BottomPanel />
    </div>
  );
}
